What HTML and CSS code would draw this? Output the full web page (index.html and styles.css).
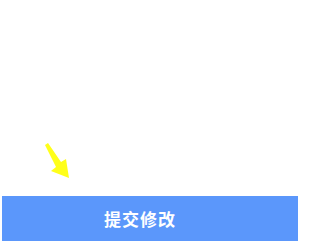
FILE: index.html
```html
<!DOCTYPE html>
<html>
<head>
<meta charset="utf-8">
<link rel="stylesheet" href="styles.css">
</head>
<body>
<div class="page">
  <div class="canvas">
    <svg class="arrow" width="30" height="40" viewBox="40 140 30 40">
      <polygon points="45,145 48,143 61,162 66,159 69,178 51,171 56,167" fill="#ffff1a"/>
    </svg>
  </div>
  <button class="submit">提交修改</button>
</div>
</body>
</html>
```
FILE: styles.css
```css
html, body {
  margin: 0;
  padding: 0;
  background: #ffffff;
}
.page {
  width: 298px;
  height: 241px;
  display: flex;
  flex-direction: column;
  overflow: hidden;
}
.canvas {
  position: relative;
  height: 196px;
  flex: none;
}
.arrow {
  position: absolute;
  left: 40px;
  top: 140px;
}
.submit {
  flex: none;
  margin: 0 0 0 2px;
  height: 45px;
  width: 296px;
  border: none;
  background: #5b97fb;
  color: #ffffff;
  font-family: "Noto Sans CJK SC", "Noto Sans", sans-serif;
  font-size: 17px;
  font-weight: 700;
  text-align: left;
  padding: 0 0 0 102px;
  letter-spacing: 1px;
}
```
